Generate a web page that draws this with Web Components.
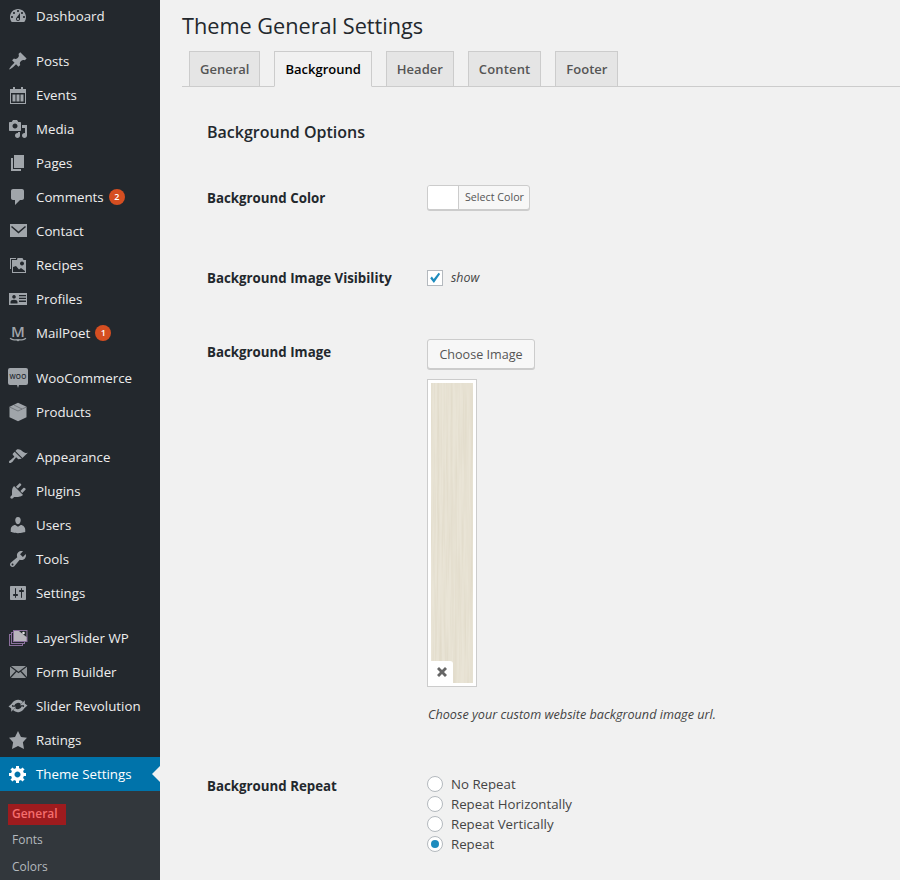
<!DOCTYPE html>
<html>
<head>
<meta charset="utf-8">
<title>Theme General Settings</title>
<style>
    html, body { margin: 0; height: 880px; overflow: hidden; background: #f1f1f1; }
    body { font-family: "Open Sans", "Noto Sans", sans-serif; font-size: 13px; color: #444; }
</style>
</head>
<body>
<wp-layout>
    <wp-sidebar slot="sidebar">
        <wp-menu-item icon="dashboard">Dashboard</wp-menu-item>
        <wp-menu-item icon="post" sep>Posts</wp-menu-item>
        <wp-menu-item icon="calendar">Events</wp-menu-item>
        <wp-menu-item icon="media">Media</wp-menu-item>
        <wp-menu-item icon="page">Pages</wp-menu-item>
        <wp-menu-item icon="comments" count="2">Comments</wp-menu-item>
        <wp-menu-item icon="email">Contact</wp-menu-item>
        <wp-menu-item icon="recipes">Recipes</wp-menu-item>
        <wp-menu-item icon="profiles">Profiles</wp-menu-item>
        <wp-menu-item icon="mailpoet" count="1">MailPoet</wp-menu-item>
        <wp-menu-item icon="woo" sep>WooCommerce</wp-menu-item>
        <wp-menu-item icon="box">Products</wp-menu-item>
        <wp-menu-item icon="appearance" sep>Appearance</wp-menu-item>
        <wp-menu-item icon="plugins">Plugins</wp-menu-item>
        <wp-menu-item icon="users">Users</wp-menu-item>
        <wp-menu-item icon="tools">Tools</wp-menu-item>
        <wp-menu-item icon="settings">Settings</wp-menu-item>
        <wp-menu-item icon="layers" sep>LayerSlider WP</wp-menu-item>
        <wp-menu-item icon="form">Form Builder</wp-menu-item>
        <wp-menu-item icon="revolution">Slider Revolution</wp-menu-item>
        <wp-menu-item icon="star">Ratings</wp-menu-item>
        <wp-menu-item icon="gear" active>Theme Settings</wp-menu-item>
        <wp-submenu>
            <wp-sub-item current>General</wp-sub-item>
            <wp-sub-item>Fonts</wp-sub-item>
            <wp-sub-item>Colors</wp-sub-item>
        </wp-submenu>
    </wp-sidebar>

    <h1 slot="title">Theme General Settings</h1>
    <wp-tabs slot="tabs">
        <wp-tab>General</wp-tab>
        <wp-tab active>Background</wp-tab>
        <wp-tab>Header</wp-tab>
        <wp-tab style="letter-spacing:.15px">Content</wp-tab>
        <wp-tab>Footer</wp-tab>
    </wp-tabs>

    <wp-panel heading="Background Options">
        <wp-option label="Background Color" gap="58" pad="0">
            <wp-color-button>Select Color</wp-color-button>
        </wp-option>
        <wp-option label="Background Image Visibility" gap="51" pad="-3">
            <wp-checkbox>show</wp-checkbox>
        </wp-option>
        <wp-option label="Background Image" gap="50" pad="0">
            <wp-image-field note="Choose your custom website background image url.">Choose Image</wp-image-field>
        </wp-option>
        <wp-option label="Background Repeat" gap="0" pad="-1">
            <wp-radio>No Repeat</wp-radio>
            <wp-radio>Repeat Horizontally</wp-radio>
            <wp-radio>Repeat Vertically</wp-radio>
            <wp-radio checked>Repeat</wp-radio>
        </wp-option>
    </wp-panel>
</wp-layout>

<script>
// inline icons, all on a 20x20 box, filled with currentColor
const ICONS = {
    dashboard: '<path fill-rule="evenodd" d="M3.76 16h12.48c1.1-1.37 1.76-3.11 1.76-5 0-4.42-3.58-8-8-8s-8 3.58-8 8c0 1.89.66 3.63 1.76 5zM10 4c.55 0 1 .45 1 1s-.45 1-1 1-1-.45-1-1 .45-1 1-1zM6 6c.55 0 1 .45 1 1s-.45 1-1 1-1-.45-1-1 .45-1 1-1zm8 0c.55 0 1 .45 1 1s-.45 1-1 1-1-.45-1-1 .45-1 1-1zm-5.37 5.55L12 7v6c0 1.1-.9 2-2 2s-2-.9-2-2c0-.57.24-1.08.63-1.45zM4 10c.55 0 1 .45 1 1s-.45 1-1 1-1-.45-1-1 .45-1 1-1zm12 0c.55 0 1 .45 1 1s-.45 1-1 1-1-.45-1-1 .45-1 1-1zm-5 3c0-.55-.45-1-1-1s-1 .45-1 1 .45 1 1 1 1-.45 1-1z"/>',
    post: '<path d="M10.44 3.02l1.82-1.82 6.36 6.35-1.83 1.82c-1.05-.68-2.48-.57-3.41.36l-.75.75c-.92.93-1.04 2.35-.35 3.41l-1.83 1.82-2.41-2.41-2.8 2.79c-.42.42-3.38 2.71-3.8 2.29s1.86-3.39 2.28-3.81l2.79-2.79L4.1 9.36l1.83-1.82c1.05.69 2.48.57 3.4-.36l.75-.75c.93-.92 1.05-2.35.36-3.41z"/>',
    calendar: '<path fill-rule="evenodd" d="M2 4h3V2h2v2h6V2h2v2h3v15H2zM3 8v10h14V8z"/><path d="M4.5 9.5h3v7h-3zM8.5 9.5h3v7h-3zM12.5 9.5h3v7h-3z"/>',
    media: '<path fill-rule="evenodd" d="M13 11V4c0-.55-.45-1-1-1h-1.67L9 1H5L3.67 3H2c-.55 0-1 .45-1 1v7c0 .55.45 1 1 1h10c.55 0 1-.45 1-1zM7 4.5c1.38 0 2.5 1.12 2.5 2.5S8.38 9.5 7 9.5 4.5 8.38 4.5 7 5.62 4.5 7 4.5z"/><path d="M14 6h5v10.5c0 1.38-1.12 2.5-2.5 2.5S14 17.88 14 16.5s1.12-2.5 2.5-2.5c.17 0 .34.02.5.05V9h-3V6zm-4 8.05V13h2v3.5c0 1.38-1.12 2.5-2.5 2.5S7 17.88 7 16.5 8.12 14 9.5 14c.17 0 .34.02.5.05z"/>',
    page: '<path d="M6 15V2h10v13H6zm-1 1h8v2H3V5h2v11z"/>',
    comments: '<path d="M5 2h9c1.1 0 2 .9 2 2v7c0 1.1-.9 2-2 2h-2l-5 5v-5H5c-1.1 0-2-.9-2-2V4c0-1.1.9-2 2-2z"/>',
    email: '<path fill-rule="evenodd" d="M2 3h17v13H2zM4 5l6.5 5.5L17 5l1 1-7.5 6.5L3 6z"/>',
    recipes: '<path fill-rule="evenodd" d="M2 3h6v1H3v10H2zM4 5h5l.5-2h5l1 2H18v13H4zM14 6.5a2 2 0 1 0 .01 0zM5 12v5h12v-1l-4-3-2 1.5L8 11z"/>',
    profiles: '<path fill-rule="evenodd" d="M1 4h18v12H1zM6 6a1.8 1.8 0 1 0 .01 0zM2.5 14.5h7V13c0-1.4-1.6-2.3-3.500-2.300S2.500 11.600 2.500 13zM11 6v1.300h7V6zM11 8.800v1.300h7V8.800zM11 11.600v1.300h7v-1.300z"/>',
    mailpoet: '<text x="10" y="13.500" text-anchor="middle" font-family="Open Sans, sans-serif" font-size="15" font-weight="600" fill="currentColor">M</text><path d="M2 15.300c2 1.400 3 1.500 4 1.500h8c1 0 2-.1 4-1.500" fill="none" stroke="currentColor" stroke-width="1.300"/><path d="M8 16.500h4l-2 2z"/>',
    woo: '<path d="M2 0h16a2 2 0 0 1 2 2v13a2 2 0 0 1-2 2h-7l-1 3-1-3H2a2 2 0 0 1-2-2V2a2 2 0 0 1 2-2z"/><text x="10" y="11" text-anchor="middle" font-family="Open Sans, sans-serif" font-size="6.500" font-weight="600" letter-spacing=".2" fill="#23282d">WOO</text>',
    box: '<path d="M10 .8l8.500 4v10.400L10 19.200 1.500 15.200V4.800z"/><path d="M6 3l8 4M2 5.200l8 3.800 8-3.800" fill="none" stroke="#23282d" stroke-width=".6" stroke-opacity=".6"/>',
    appearance: '<path d="M14.480 11.060L7.410 3.990l1.500-1.500c.5-.56 2.300-.47 3.510.32 1.210.8 1.430 1.280 2.910 2.100 1.180.64 2.450 1.260 4.450.85zm-.71.71L6.700 4.700 4.930 6.470c-.39.39-.39 1.020 0 1.410l1.060 1.060c.39.39.39 1.030 0 1.420-.6.6-1.430 1.110-2.210 1.690-.35.260-.7.530-1.010.84C1.430 13.230.4 14.910 1.200 15.700c.8.790 2.480-.23 3.820-1.570.31-.31.58-.66.85-1.020.57-.78 1.080-1.610 1.690-2.210.39-.39 1.020-.39 1.410 0l1.060 1.060c.39.39 1.020.39 1.410 0z"/>',
    plugins: '<path d="M13.110 4.360L9.870 7.600 8 5.730l3.240-3.240c.35-.34 1.050-.2 1.560.32.52.51.66 1.210.31 1.550zm-8 1.770l.91-1.120 9.010 9.010-1.190.84c-.71.71-2.630 1.160-3.820 1.160H6.140L4.900 17.260c-.59.59-1.540.59-2.120 0-.59-.58-.59-1.530 0-2.120l1.240-1.240v-3.880c0-1.130.4-3.190 1.090-3.890zm7.260 3.970l3.240-3.240c.34-.35 1.040-.21 1.550.31.52.51.66 1.210.31 1.550l-3.240 3.250z"/>',
    users: '<path d="M10 9.250c-2.270 0-2.730-3.440-2.730-3.440C7 4.020 7.820 2 9.970 2c2.160 0 2.980 2.020 2.710 3.810 0 0-.41 3.440-2.680 3.440zm0 2.570L12.720 10c2.390 0 4.520 2.330 4.520 4.530v2.490s-3.650 1.130-7.240 1.130c-3.650 0-7.240-1.130-7.240-1.130v-2.490c0-2.250 1.940-4.480 4.470-4.480z"/>',
    tools: '<path fill-rule="evenodd" d="M16.680 9.770c-1.340 1.340-3.300 1.670-4.950.99l-5.410 6.520c-.99.99-2.590.99-3.580 0s-.99-2.590 0-3.570l6.520-5.420c-.68-1.650-.35-3.610.99-4.950 1.280-1.280 3.120-1.620 4.720-1.060l-2.890 2.890 2.820 2.820 2.860-2.870c.53 1.580.18 3.390-1.080 4.650zM3.810 16.210c.4.39 1.040.39 1.430 0 .4-.4.4-1.040 0-1.430-.39-.4-1.030-.4-1.430 0-.39.39-.39 1.030 0 1.430z"/>',
    settings: '<path fill-rule="evenodd" d="M18 16V4c0-.55-.45-1-1-1H3c-.55 0-1 .45-1 1v12c0 .55.45 1 1 1h14c.55 0 1-.45 1-1zM8 11h1c.55 0 1 .45 1 1s-.45 1-1 1H8v1.500c0 .28-.22.5-.5.5s-.5-.22-.5-.5V13H6c-.55 0-1-.45-1-1s.45-1 1-1h1V5.500c0-.28.22-.5.5-.5s.5.22.5.5V11zm5-2h-1c-.55 0-1-.45-1-1s.45-1 1-1h1V5.500c0-.28.22-.5.5-.5s.5.22.5.5V7h1c.55 0 1 .45 1 1s-.45 1-1 1h-1v5.500c0 .28-.22.5-.5.5s-.5-.22-.5-.5V9z"/>',
    layers: '<g fill="#23282d" stroke="#8a6f9c" stroke-width="1"><rect x="1.500" y="6.500" width="13" height="11"/><rect x="3.500" y="4.500" width="13" height="11"/></g><rect x="5.500" y="2.500" width="13.500" height="11" fill="#b9b6bd" stroke="#8a6f9c" stroke-width="1"/><path d="M11 3h7.500v6z" fill="#23282d"/><circle cx="15.500" cy="5" r="1.300" fill="#e0e0e0"/>',
    form: '<path d="M2 4h17v12H2z" fill="#8f9498"/><path d="M2 4l8.500 6.500L19 4M2 16l6.500-7M19 16l-6.500-7" fill="none" stroke="#23282d" stroke-width="1.200"/>',
    revolution: '<g fill="none" stroke="currentColor" stroke-width="3"><path d="M4.800 9.200A5.500 5.500 0 0 1 14 7"/><path d="M15.200 10.800A5.500 5.500 0 0 1 6 13"/></g><path d="M11.800 9.300h5v-5zM8.200 10.700h-5v5z"/><path d="M.5 10.500L4 7.500v5.500zM19.500 9.500L16 12.500V7z"/>',
    star: '<path d="M10 1l3 6 6 .75-4.120 4.620L16 19l-6-3-6 3 1.130-6.630L1 7.750 7 7z"/>',
    gear: '<path fill-rule="evenodd" d="M18 12h-2.180c-.17.7-.44 1.350-.81 1.930l1.540 1.540-2.100 2.100-1.540-1.540c-.58.36-1.230.63-1.910.79V19H8v-2.180c-.68-.16-1.330-.43-1.910-.79l-1.540 1.540-2.120-2.120 1.540-1.540c-.36-.58-.63-1.230-.79-1.910H1V9.030h2.170c.16-.7.44-1.350.8-1.940L2.430 5.550l2.100-2.100 1.540 1.540c.58-.37 1.240-.64 1.930-.81V2h3v2.180c.68.16 1.330.43 1.910.79l1.540-1.540 2.120 2.120-1.540 1.540c.36.59.64 1.240.8 1.940H18V12zm-8.500 1.500c1.660 0 3-1.340 3-3s-1.340-3-3-3-3 1.340-3 3 1.340 3 3 3z"/>'
};

class WpLayout extends HTMLElement {
    constructor() {
        super();
        this.attachShadow({ mode: 'open' });
    }

    connectedCallback() {
        this.shadowRoot.innerHTML = `
            <style>
                :host { display: flex; height: 880px; overflow: hidden; }
                .main { flex: 1; min-width: 0; padding: 0 0 0 22px; }
                ::slotted(h1) {
                    margin: 0; padding: 11px 0 0;
                    font-size: 21.7px; font-weight: 400; line-height: 29px; color: #23282d;
                }
            </style>
            <slot name="sidebar"></slot>
            <div class="main">
                <slot name="title"></slot>
                <slot name="tabs"></slot>
                <slot></slot>
            </div>
        `;
    }
}

class WpSidebar extends HTMLElement {
    constructor() {
        super();
        this.attachShadow({ mode: 'open' });
    }

    connectedCallback() {
        this.shadowRoot.innerHTML = `
            <style>
                :host { display: block; flex: none; width: 160px; height: 881px; margin-top: -1px; background: #23282d; }
            </style>
            <slot></slot>
        `;
    }
}

class WpMenuItem extends HTMLElement {
    constructor() {
        super();
        this.attachShadow({ mode: 'open' });
    }

    connectedCallback() {
        const count = this.getAttribute('count');
        this.shadowRoot.innerHTML = `
            <style>
                :host { display: flex; align-items: center; position: relative; height: 34px; font-size: 13.3px; color: #eee; }
                :host([sep]) { margin-top: 11px; }
                :host([active]) { background: #0073aa; color: #fff; }
                svg { flex: none; width: 20px; height: 20px; margin: 0 8px; fill: #a0a5aa; color: #a0a5aa; overflow: visible; }
                :host([active]) svg { fill: #fff; color: #fff; }
                .count {
                    margin-left: 5px; min-width: 16px; height: 16px; border-radius: 50%;
                    background: #d54e21; color: #fff; font-size: 9px; font-weight: 600;
                    line-height: 16px; text-align: center;
                }
                .arrow {
                    position: absolute; right: 0; top: 9px;
                    border: 8px solid transparent; border-left-width: 0; border-right-color: #f1f1f1;
                }
            </style>
            <svg viewBox="0 0 20 20">${ICONS[this.getAttribute('icon')] || ''}</svg>
            <slot></slot>
            ${count ? `<span class="count">${count}</span>` : ''}
            ${this.hasAttribute('active') ? '<span class="arrow"></span>' : ''}
        `;
    }
}

class WpSubmenu extends HTMLElement {
    constructor() {
        super();
        this.attachShadow({ mode: 'open' });
    }

    connectedCallback() {
        this.shadowRoot.innerHTML = `
            <style>
                :host { display: block; height: 200px; padding-top: 8px; background: #32373c; }
            </style>
            <slot></slot>
        `;
    }
}

class WpSubItem extends HTMLElement {
    constructor() {
        super();
        this.attachShadow({ mode: 'open' });
    }

    connectedCallback() {
        this.shadowRoot.innerHTML = `
            <style>
                :host {
                    display: flex; align-items: center; box-sizing: border-box; height: 27px;
                    padding-left: 12px; font-size: 12px; color: #b4b9be;
                }
                :host([current]) { padding-top: 3px; font-weight: 600; color: #f56e6e; }
                span { display: block; line-height: 19px; }
                :host([current]) span { margin-left: -4px; padding: 0 8px 2px 4px; background: #9e1b1e; }
            </style>
            <span><slot></slot></span>
        `;
    }
}

class WpTabs extends HTMLElement {
    constructor() {
        super();
        this.attachShadow({ mode: 'open' });
    }

    connectedCallback() {
        this.shadowRoot.innerHTML = `
            <style>
                :host {
                    display: flex; gap: 14px; box-sizing: border-box; height: 36px; margin-top: 11px; padding-left: 7px;
                    border-bottom: 1px solid #ccc;
                }
            </style>
            <slot></slot>
        `;
    }
}

class WpTab extends HTMLElement {
    constructor() {
        super();
        this.attachShadow({ mode: 'open' });
    }

    connectedCallback() {
        this.shadowRoot.innerHTML = `
            <style>
                :host {
                    display: block; height: 36px; box-sizing: border-box; padding: 5px 10px;
                    background: #e5e5e5; border: 1px solid #ccc; color: #555;
                    font-size: 13px; font-weight: 600; line-height: 24px;
                }
                :host([active]) { background: #f1f1f1; border-bottom-color: #f1f1f1; color: #000; }
            </style>
            <slot></slot>
        `;
    }
}

class WpPanel extends HTMLElement {
    constructor() {
        super();
        this.attachShadow({ mode: 'open' });
    }

    connectedCallback() {
        this.shadowRoot.innerHTML = `
            <style>
                :host { display: block; padding: 32px 0 0 25px; }
                h3 {
                    margin: 0 0 40px; font-size: 16px; font-weight: 600; line-height: 26px; color: #23282d;
                }
            </style>
            <h3>${this.getAttribute('heading')}</h3>
            <slot></slot>
        `;
    }
}

class WpOption extends HTMLElement {
    constructor() {
        super();
        this.attachShadow({ mode: 'open' });
    }

    connectedCallback() {
        this.shadowRoot.innerHTML = `
            <style>
                :host { display: grid; grid-template-columns: 220px 1fr; align-items: start; }
                .label { font-weight: 700; font-size: 13.3px; line-height: 26px; color: #23282d; }
            </style>
            <div class="label" style="margin-top:${this.getAttribute('pad')}px">${this.getAttribute('label')}</div>
            <div class="field" style="padding-bottom:${this.getAttribute('gap')}px"><slot></slot></div>
        `;
    }
}

class WpColorButton extends HTMLElement {
    constructor() {
        super();
        this.attachShadow({ mode: 'open' });
    }

    connectedCallback() {
        this.shadowRoot.innerHTML = `
            <style>
                :host {
                    display: flex; width: 103px; height: 25px; box-sizing: border-box;
                    background: #f7f7f7; border: 1px solid #ccc; border-radius: 3px;
                    box-shadow: 0 1px 0 #ccc; overflow: hidden; font-size: 10.7px; color: #555;
                }
                .swatch { width: 30px; background: #fff; border-right: 1px solid #ccc; }
                .text { padding-left: 6px; line-height: 23px; }
            </style>
            <span class="swatch"></span>
            <span class="text"><slot></slot></span>
        `;
    }
}

class WpCheckbox extends HTMLElement {
    constructor() {
        super();
        this.attachShadow({ mode: 'open' });
    }

    connectedCallback() {
        this.shadowRoot.innerHTML = `
            <style>
                :host { display: flex; align-items: center; gap: 8px; height: 20px; font-size: 12.4px; font-style: italic; color: #444; }
                .box { width: 16px; height: 16px; box-sizing: border-box; background: #fff; border: 1px solid #b4b9be; }
                svg { display: block; width: 14px; height: 14px; fill: #1e8cbe; }
                .text { margin-top: -2px; }
            </style>
            <span class="box"><svg viewBox="0 0 14 14"><path d="M2.200 7.300l1.700-1.700 1.800 2.300 4.900-6.100 1.500 1.300-6.200 9z"/></svg></span>
            <span class="text"><slot></slot></span>
        `;
    }
}

class WpImageField extends HTMLElement {
    constructor() {
        super();
        this.attachShadow({ mode: 'open' });
    }

    connectedCallback() {
        this.shadowRoot.innerHTML = `
            <style>
                :host { display: block; }
                button {
                    display: block; height: 30px; width: 108px; padding: 0; box-sizing: border-box; white-space: nowrap;
                    font: 12.6px "Open Sans", "Noto Sans", sans-serif; color: #555;
                    background: #f7f7f7; border: 1px solid #ccc; border-radius: 3px; box-shadow: 0 1px 0 #ccc;
                }
                .thumb {
                    position: relative; box-sizing: border-box; width: 50px; height: 308px;
                    margin-top: 10px; padding: 3px; background: #fff; border: 1px solid #ccc;
                }
                .wood { display: block; width: 42px; height: 300px; }
                .remove {
                    position: absolute; left: 3px; bottom: 3px; width: 22px; height: 22px;
                    display: flex; align-items: center; justify-content: center;
                    background: #fff; border-top-right-radius: 3px;
                }
                .remove svg { width: 10px; height: 10px; fill: #666; }
                p { margin: 17px 0 0; font-size: 12.65px; font-style: italic; line-height: 20px; color: #444; padding-left: 1px; }
            </style>
            <button type="button"><slot></slot></button>
            <div class="thumb">
                <!-- wood texture: stretched noise, so the grain runs vertically -->
                <svg class="wood" viewBox="0 0 42 300">
                    <filter id="grain" x="0" y="0" width="100%" height="100%">
                        <feTurbulence type="fractalNoise" baseFrequency="0.45 0.012" numOctaves="3" seed="4"/>
                        <feColorMatrix values="0 0 0 0 .62  0 0 0 0 .56  0 0 0 0 .42  .6 0 0 0 -.2"/>
                    </filter>
                    <rect width="42" height="300" fill="#e9e4d6"/>
                    <rect width="42" height="300" filter="url(#grain)"/>
                </svg>
                <span class="remove"><svg viewBox="0 0 10 10"><path d="M0 2l2-2 3 3 3-3 2 2-3 3 3 3-2 2-3-3-3 3-2-2 3-3z"/></svg></span>
            </div>
            <p>${this.getAttribute('note')}</p>
        `;
    }
}

class WpRadio extends HTMLElement {
    constructor() {
        super();
        this.attachShadow({ mode: 'open' });
    }

    connectedCallback() {
        this.shadowRoot.innerHTML = `
            <style>
                :host { display: flex; align-items: center; gap: 8px; height: 20px; font-size: 13.25px; color: #444; }
                .dot {
                    display: flex; align-items: center; justify-content: center;
                    width: 16px; height: 16px; box-sizing: border-box;
                    background: #fff; border: 1px solid #b4b9be; border-radius: 50%;
                }
                :host([checked]) .dot::before {
                    content: ""; width: 8px; height: 8px; border-radius: 50%; background: #1e8cbe;
                }
            </style>
            <span class="dot"></span>
            <span><slot></slot></span>
        `;
    }
}

customElements.define('wp-layout', WpLayout);
customElements.define('wp-sidebar', WpSidebar);
customElements.define('wp-menu-item', WpMenuItem);
customElements.define('wp-submenu', WpSubmenu);
customElements.define('wp-sub-item', WpSubItem);
customElements.define('wp-tabs', WpTabs);
customElements.define('wp-tab', WpTab);
customElements.define('wp-panel', WpPanel);
customElements.define('wp-option', WpOption);
customElements.define('wp-color-button', WpColorButton);
customElements.define('wp-checkbox', WpCheckbox);
customElements.define('wp-image-field', WpImageField);
customElements.define('wp-radio', WpRadio);
</script>
</body>
</html>
